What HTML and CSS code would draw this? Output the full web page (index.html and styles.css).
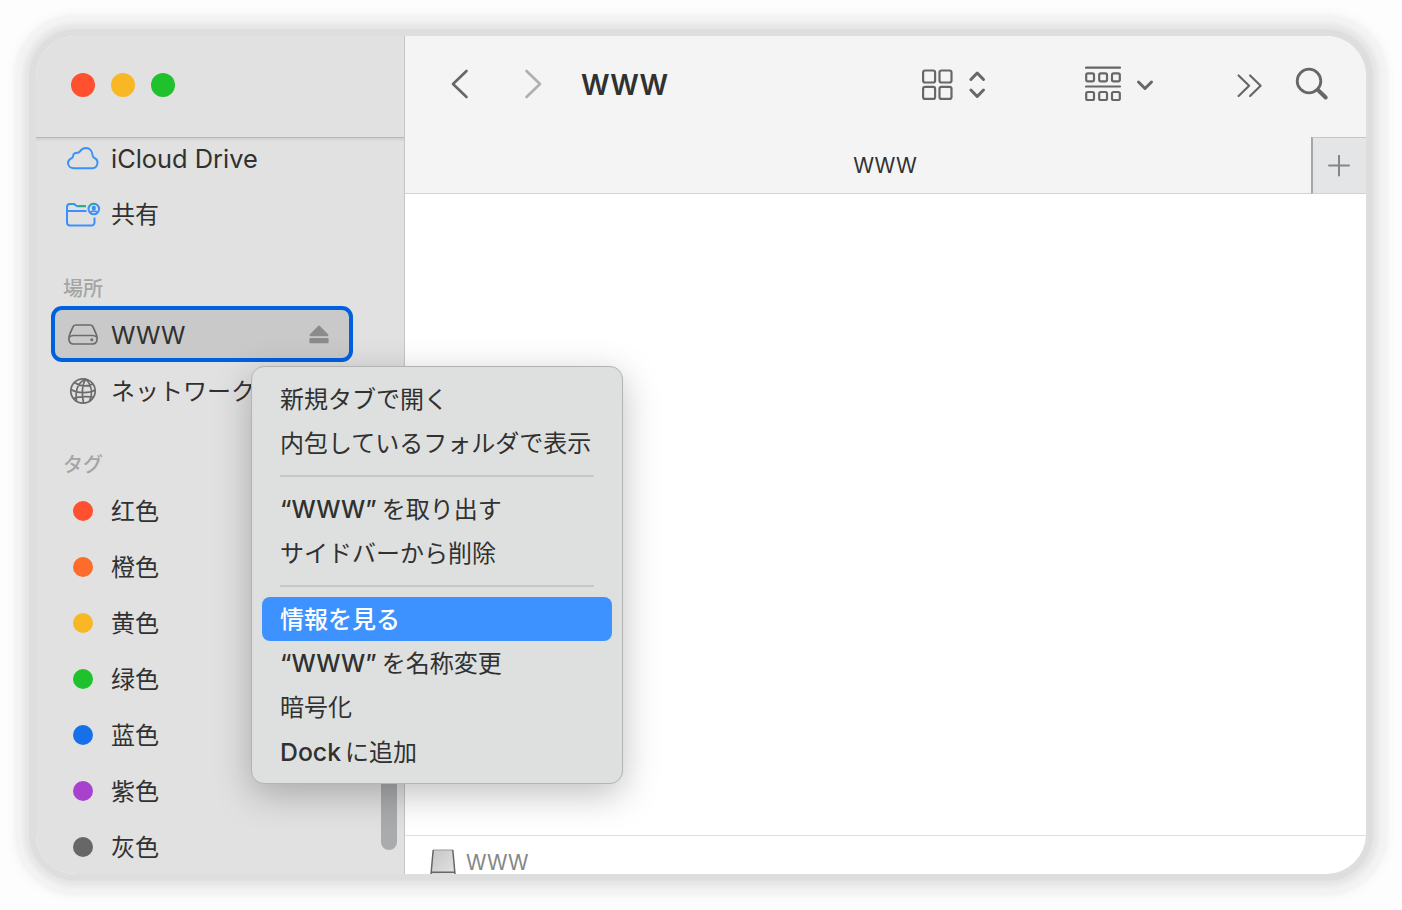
FILE: index.html
```html
<!DOCTYPE html>
<html lang="ja">
<head>
  <meta charset="UTF-8" />
  <title>WWW</title>
  <link rel="stylesheet" href="styles.css">
</head>
<body>

  <div class="window">
    <aside class="sidebar">
      <div class="titlebar">
        <span class="light red"></span>
        <span class="light yellow"></span>
        <span class="light green"></span>
      </div>
      <div class="sidebar-list">
        <div class="item">
          <svg class="icon" width="36" height="28" viewBox="0 0 36 28" fill="none" stroke="#3b91fb" stroke-width="2"><path d="M9 24.200h18.500a5.400 5.400 0 0 0 2-10.200c-1.500-.7-1.800-1-1.900-2.500C27.300 7 24.700 4 21 4c-3.300 0-4.800 1.500-6.300 3.600-.7 1-1.300 1.100-2.400 1.100-2.900 0-4 1.300-4.200 3.300-.1 1.200-.3 1.500-1.400 2.200C4.200 15.500 3 16.800 3 19c0 3 2.600 5.200 6 5.200z"/></svg>
          <span class="latin">iCloud Drive</span>
        </div>
        <div class="item">
          <svg class="icon" width="36" height="28" viewBox="0 0 36 28" fill="none" stroke="#3b91fb" stroke-width="2"><path d="M29.500 17.500v5a3 3 0 0 1-3 3H5a3 3 0 0 1-3-3V7a3 3 0 0 1 3-3h3.500c1.700 0 2.200 2.200 4 2.200H21M2 11h19.500"/><circle cx="28.800" cy="9" r="5.300"/><ellipse cx="28.800" cy="8" rx="2.100" ry="2.600" fill="#3b91fb" stroke="none"/><path stroke-width="1.800" d="M25.200 13c.8-2.400 6.400-2.400 7.200 0"/><path stroke="#1fc02c" stroke-width="1.200" d="M4.500 3.700h5M13 5.900h8M24.500 5.800a5.300 5.300 0 0 1 6.500-1.700"/></svg>
          <span class="label">共有</span>
        </div>

        <div class="heading places">場所</div>
        <div class="item selected">
          <svg class="icon" width="36" height="28" viewBox="0 0 36 28" fill="none" stroke="#6a6b6a" stroke-width="1.700"><path d="M11 5h14c1.500 0 2.400.6 3 1.900l2.900 6.500c.8 1.900 1.200 3.300 1.200 5.100 0 3.400-1.700 5.500-4.700 5.500H8.600c-3 0-4.700-2.100-4.700-5.500 0-1.800.4-3.200 1.200-5.100L8 6.900C8.600 5.600 9.500 5 11 5z"/><path d="M4.600 16.800c1-.9 2.300-1.300 4-1.300h18.800c1.700 0 3 .4 4 1.300"/><circle cx="26.800" cy="19.700" r="1.500" fill="#6a6b6a" stroke="none"/></svg>
          <span class="latin">WWW</span>
          <svg class="eject" width="20" height="20" viewBox="0 0 20 20" fill="#8b8b8b"><path d="M9.100 2Q10 1.100 10.900 2L19 10.200Q20 12.200 18.300 12.200H1.700Q0 12.200 1 10.200z"/><rect x=".4" y="14" width="19.200" height="5.200" rx="1"/></svg>
        </div>
        <div class="item">
          <svg class="icon" width="36" height="28" viewBox="0 0 36 28" fill="none" stroke="#6a6b6a" stroke-width="1.700"><circle cx="18" cy="14" r="12.200"/><path d="M21 2c-4 5-4.500 15-2.500 24M21 2c5.500 6 7 14.500 3.500 22.500M21 2C13 5 10 12 11.500 24M9.500 5.500c5 4 13 4.300 18.500 1.500M6 12.500c7 4.200 18 4 24.300.5M8.500 21.500c6-2.500 14-2 20-1.500"/></svg>
          <span class="label">ネットワーク</span>
        </div>

        <div class="heading">タグ</div>
        <div class="tag-list" lang="zh-CN">
          <div class="item"><span class="dot dot-red"></span><span class="label">红色</span></div>
          <div class="item"><span class="dot dot-orange"></span><span class="label">橙色</span></div>
          <div class="item"><span class="dot dot-yellow"></span><span class="label">黄色</span></div>
          <div class="item"><span class="dot dot-green"></span><span class="label">绿色</span></div>
          <div class="item"><span class="dot dot-blue"></span><span class="label">蓝色</span></div>
          <div class="item"><span class="dot dot-purple"></span><span class="label">紫色</span></div>
          <div class="item"><span class="dot dot-gray"></span><span class="label">灰色</span></div>
        </div>
      </div>
      <div class="scrollbar"></div>
    </aside>

    <main class="main">
      <div class="toolbar">
        <svg class="back" width="20" height="32" viewBox="0 0 20 32" fill="none" stroke="#666766" stroke-width="2.600" stroke-linecap="round" stroke-linejoin="round"><path d="M16.500 3 3 16 16.500 29"/></svg>
        <svg class="forward" width="20" height="32" viewBox="0 0 20 32" fill="none" stroke="#aeafae" stroke-width="2.600" stroke-linecap="round" stroke-linejoin="round"><path d="M3.500 3 17 16 3.500 29"/></svg>
        <h1 class="title">WWW</h1>
        <svg class="view" width="66" height="36" viewBox="0 0 66 36" fill="none" stroke="#666766" stroke-width="2.200"><rect x="1.100" y="4.500" width="12" height="12" rx="2"/><rect x="17.500" y="4.500" width="12" height="12" rx="2"/><rect x="1.100" y="20.900" width="12" height="12" rx="2"/><rect x="17.500" y="20.900" width="12" height="12" rx="2"/><path stroke-width="3" stroke-linecap="round" stroke-linejoin="round" d="m48.900 13.500 6.300-6.500 6.300 6.500M48.900 24l6.300 6.500 6.300-6.500"/></svg>
        <svg class="group" width="70" height="36" viewBox="0 0 70 36" fill="none" stroke="#666766" stroke-width="2.200"><path stroke-linecap="round" d="M1 1.700h34M1 20.500h34"/><rect x="1.200" y="7.300" width="7.800" height="8" rx="1.600"/><rect x="14.200" y="7.300" width="7.800" height="8" rx="1.600"/><rect x="27" y="7.300" width="7.800" height="8" rx="1.600"/><rect x="1.200" y="26" width="7.800" height="8" rx="1.600"/><rect x="14.200" y="26" width="7.800" height="8" rx="1.600"/><rect x="27" y="26" width="7.800" height="8" rx="1.600"/><path stroke-width="3" stroke-linecap="round" stroke-linejoin="round" d="m53.500 16 6.500 6.500 6.500-6.500"/></svg>
        <svg class="more" width="26" height="28" viewBox="0 0 26 28" fill="none" stroke="#666766" stroke-width="2.200" stroke-linecap="round" stroke-linejoin="round"><path d="m1.600 3.500 10.500 10.200L1.600 24M13.100 3.500l10.500 10.200L13.100 24"/></svg>
        <svg class="search" width="36" height="36" viewBox="0 0 36 36" fill="none" stroke="#666766" stroke-width="2.800"><circle cx="15" cy="15" r="11.800"/><path stroke-width="4" stroke-linecap="round" d="m24 24 7.700 7.500"/></svg>
      </div>

      <div class="tabbar">
        <div class="tab">WWW</div>
        <div class="add-tab">
          <svg width="22" height="22" viewBox="0 0 22 22" stroke="#858685" stroke-width="2" stroke-linecap="round"><path d="M1 10.500h20M11 .5v20"/></svg>
        </div>
      </div>

      <div class="files"></div>

      <div class="pathbar">
        <svg width="26" height="25" viewBox="0 0 26 25">
          <defs>
            <linearGradient id="disk" x1="0" y1="0" x2="1" y2="1">
              <stop offset="0" stop-color="#c4c5c4"/>
              <stop offset="1" stop-color="#e2e3e2"/>
            </linearGradient>
          </defs>
          <path d="M3 1h20l2 24H1z" fill="url(#disk)"/>
          <path d="M3 1h20" stroke="#a5a6a5" stroke-width="1.200"/>
          <path d="M3.200 1 1 25M22.800 1 25 25M1 23.200h24" fill="none" stroke="#666766" stroke-width="1.500"/>
        </svg>
        <span>WWW</span>
      </div>
    </main>
  </div>

  <div class="menu">
    <div class="menu-item">新規タブで開く</div>
    <div class="menu-item">内包しているフォルダで表示</div>
    <div class="separator"></div>
    <div class="menu-item"><span class="name">“WWW”</span>を取り出す</div>
    <div class="menu-item">サイドバーから削除</div>
    <div class="separator"></div>
    <div class="menu-item active">情報を見る</div>
    <div class="menu-item"><span class="name">“WWW”</span>を名称変更</div>
    <div class="menu-item">暗号化</div>
    <div class="menu-item"><span class="dock">Dock</span>に追加</div>
  </div>

</body>
</html>
```
FILE: styles.css
```css
* {
  box-sizing: border-box;
}

body {
  margin: 0;
  padding: 36px;
  height: 910px;
  overflow: hidden;
  background: #fdfdfd;
  color: #303130;
  font-family: Inter, 'Noto Sans CJK JP', sans-serif;
  font-size: 24px;
}

.window {
  display: flex;
  width: 1330px;
  height: 838px;
  border-radius: 40px;
  overflow: hidden;
  background: #fff;
  box-shadow: 0 0 1px 7px #dedede, 0 0 3px 11px #e6e6e6, 0 0 3px 14px #ececec,
    0 0 3px 22px #f3f3f3, 0 0 6px 26px #f9f9f9;
}

/* sidebar */
.sidebar {
  position: relative;
  display: flex;
  flex-direction: column;
  width: 369px;
  background: #e1e1e1;
  border-right: 1px solid #c5c6c5;
}

.titlebar {
  display: flex;
  flex: none;
  gap: 16px;
  height: 102px;
  padding: 37px 0 0 35px;
  border-bottom: 1px solid #b5b6b5;
}

.light {
  width: 24px;
  height: 24px;
  border-radius: 50%;
}

.red, .dot-red {
  background: #ff5130;
}

.yellow, .dot-yellow {
  background: #f8b725;
}

.green, .dot-green {
  background: #1fc22c;
}

.sidebar-list {
  flex: 1;
  min-height: 0;
  overflow: hidden;
  padding: 0 52px 0 15px;
  box-shadow: inset 0 3px 3px -1px #d0d1d0;
}

.item {
  display: flex;
  align-items: center;
  height: 56px;
  padding-left: 14px;
  white-space: nowrap;
}

.item:first-child {
  margin-top: -8px;
}

.tag-list .item:first-child {
  margin-top: 0;
}

.icon {
  flex: none;
  margin-right: 10px;
}

.label {
  padding-bottom: 3px;
}

.latin {
  font-size: 25.4px;
}

.heading {
  height: 64px;
  padding: 28px 0 0 12px;
  line-height: 36px;
  font-size: 20px;
  font-weight: 500;
  color: #a4a5a4;
}

.heading.places {
  padding-top: 29px;
}

.selected {
  width: 302px;
  margin-bottom: 1px;
  padding-left: 10px;
  padding-right: 20px;
  background: #c8c9c8;
  border: 4px solid #0060df;
  border-radius: 11px;
}

.selected .latin {
  padding-top: 1px;
  font-size: 24.8px;
}

.eject {
  margin-left: auto;
}

.tag-list {
  font-family: 'Noto Sans CJK SC', sans-serif;
}

.dot {
  width: 20px;
  height: 20px;
  margin: 0 18px 0 8px;
  border-radius: 50%;
}

.dot-orange {
  background: #fd6c2b;
}

.dot-blue {
  background: #1670ea;
}

.dot-purple {
  background: #a842ce;
}

.dot-gray {
  background: #666766;
}

.scrollbar {
  position: absolute;
  right: 7px;
  bottom: 24px;
  width: 16px;
  height: 300px;
  border-radius: 8px;
  background: #aaabac;
}

/* main area */
.main {
  display: flex;
  flex-direction: column;
  flex: 1;
}

.toolbar {
  display: flex;
  align-items: center;
  flex: none;
  height: 101px;
  padding: 0 36px 5px 45px;
  background: #f4f4f4;
}

.forward {
  margin-left: 53px;
}

.title {
  margin: 2px 0 0 38px;
  width: 341px;
  font-size: 28px;
  font-weight: 600;
}

.group {
  margin-left: 97px;
}

.more {
  margin: 4px 0 0 82px;
}

.search {
  margin-left: auto;
}

.tabbar {
  display: flex;
  flex: none;
  height: 57px;
  background: #f4f4f4;
}

.tab {
  flex: 1;
  padding-left: 54px;
  line-height: 56px;
  text-align: center;
  font-size: 21.2px;
  border-bottom: 1px solid #d2d3d2;
}

.add-tab {
  display: flex;
  align-items: center;
  justify-content: center;
  width: 55px;
  padding-right: 2px;
  background: #e4e5e7;
  border-left: 2px solid #a5a6a5;
  border-top: 1px solid #c5c6c5;
  border-bottom: 1px solid #d2d3d2;
}

.files {
  flex: 1;
}

.pathbar {
  display: flex;
  flex: none;
  gap: 10px;
  height: 39px;
  padding: 13px 0 0 25px;
  border-top: 1px solid #dedede;
  color: #858685;
  font-size: 20.8px;
  line-height: 24px;
}

.pathbar svg {
  flex: none;
}

.pathbar span {
  padding-top: 2px;
}

/* context menu */
.menu {
  position: absolute;
  left: 251px;
  top: 366px;
  width: 372px;
  height: 418px;
  padding: 10px 10px;
  background: #dee0df;
  border: 1px solid #b2b3b2;
  border-radius: 13px;
  box-shadow: 0 10px 36px rgba(0, 0, 0, 0.25);
}

.menu-item {
  height: 44px;
  padding-left: 18px;
  line-height: 46px;
  white-space: nowrap;
}

.menu-item.active {
  background: #3e92ff;
  border-radius: 8px;
  color: #fff;
  font-weight: 500;
}

.name,
.dock {
  font-size: 24.2px;
  font-weight: 500;
}

.name {
  margin-right: 5px;
}

.dock {
  font-size: 24.8px;
  margin-right: 4px;
}

.separator {
  height: 2px;
  margin: 10px 18px;
  background: #c6c8c7;
}
```
